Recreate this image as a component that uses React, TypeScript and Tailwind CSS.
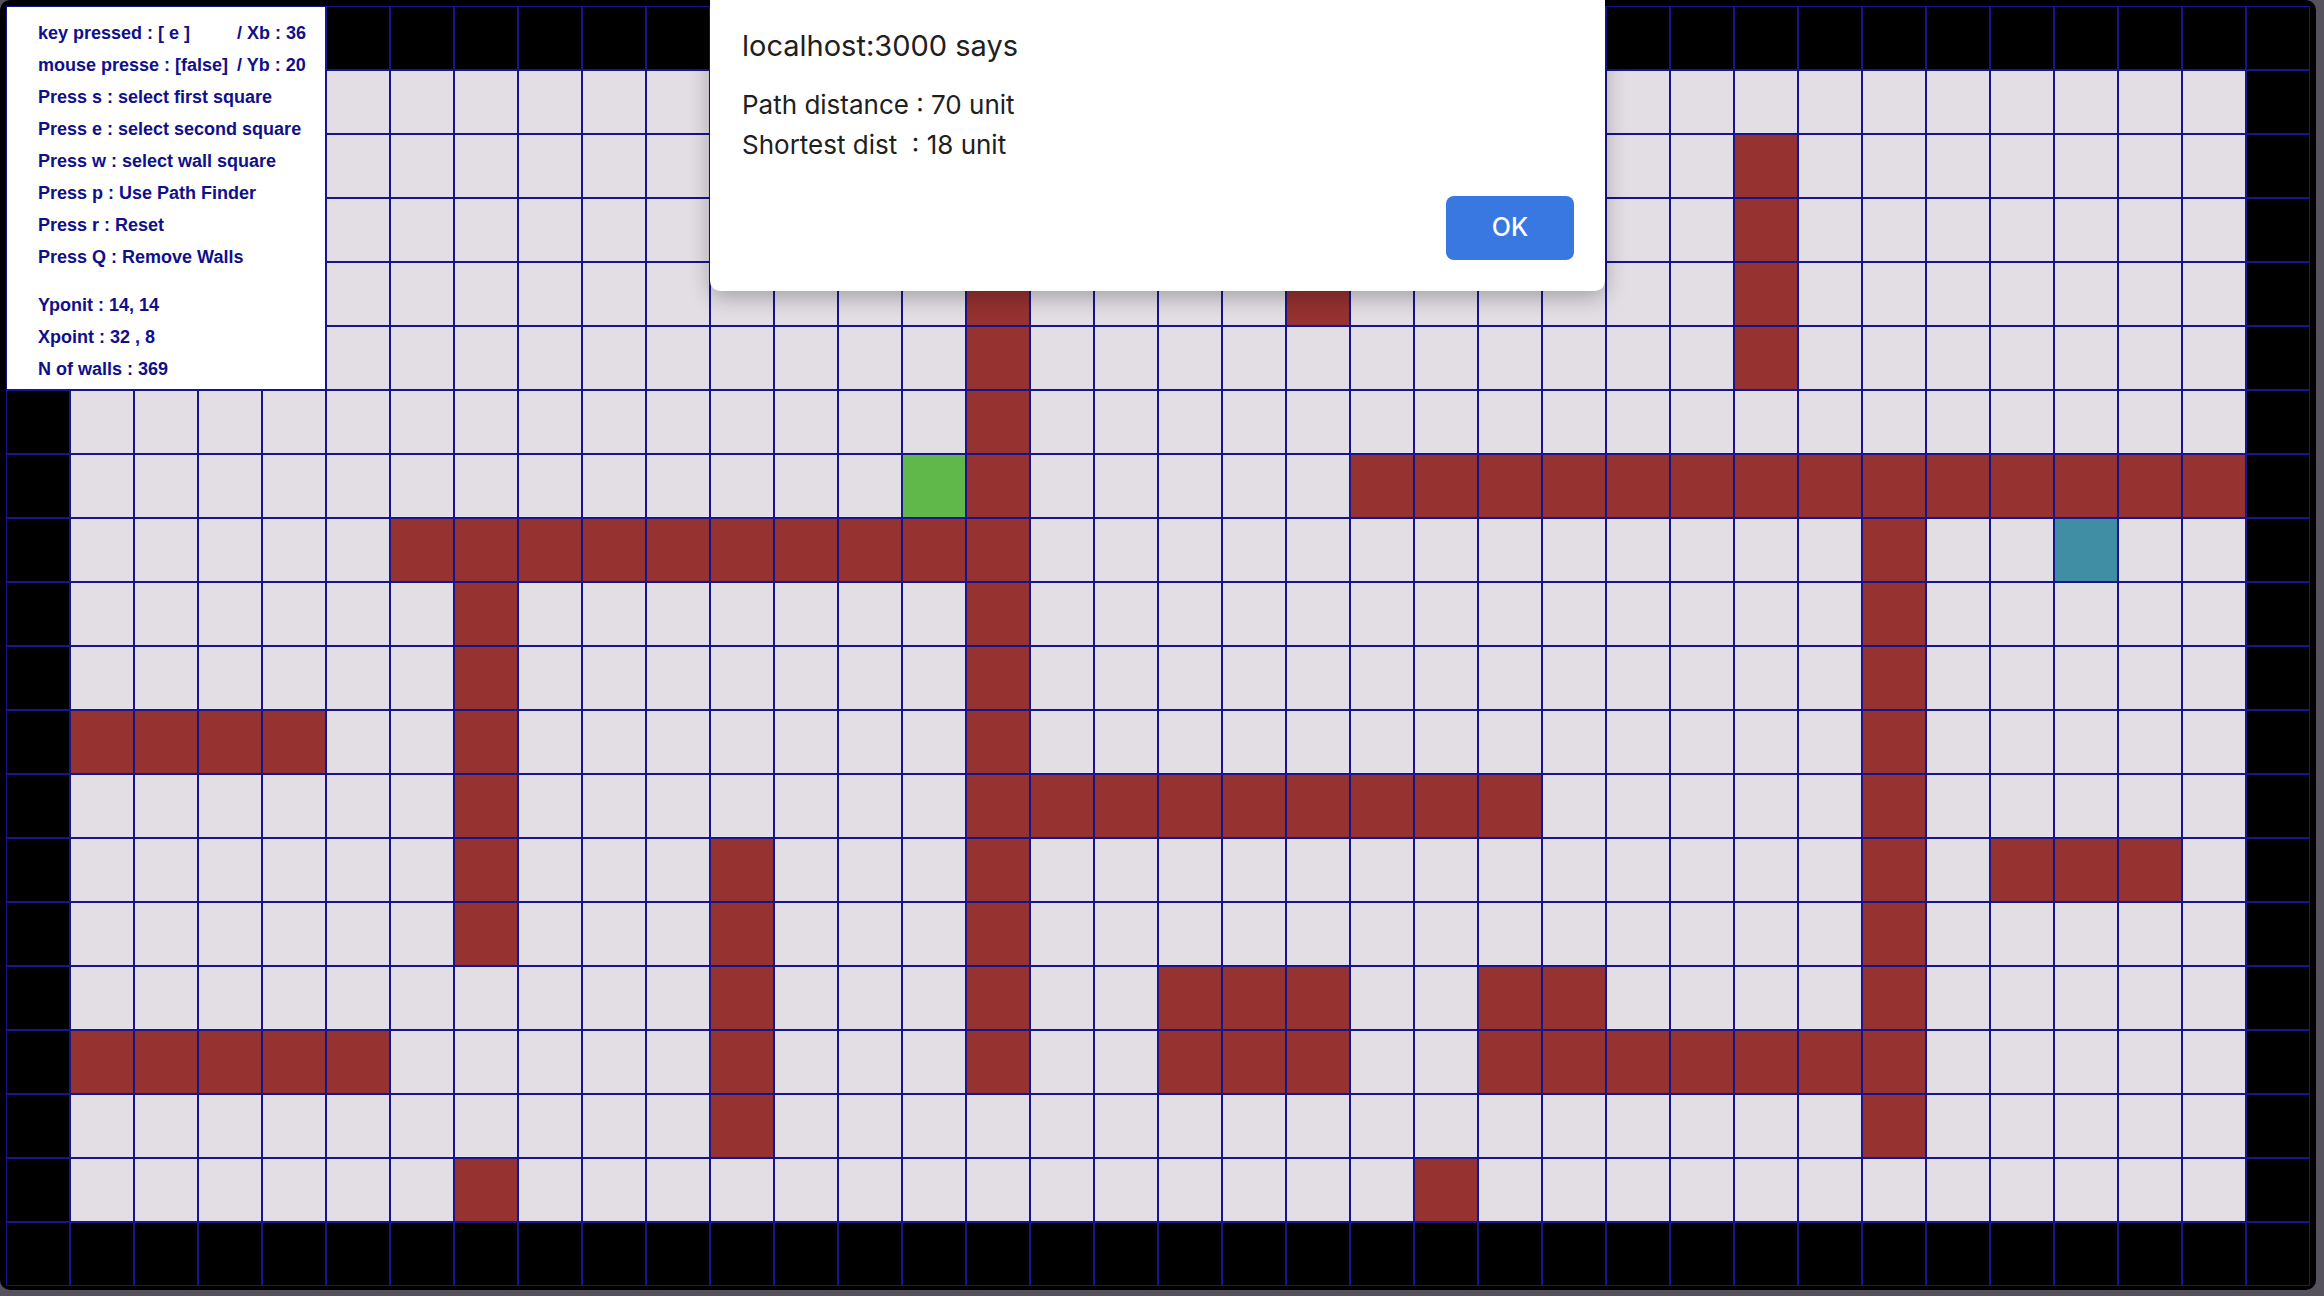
import React from "react";

const ROWS = 20;
const COLS = 36;

const wallSet = new Set<string>();
const addWall = (r: number, c: number) => wallSet.add(`${r}-${c}`);
const hRun = (r: number, c1: number, c2: number) => {
  for (let c = c1; c <= c2; c++) addWall(r, c);
};
const vRun = (c: number, r1: number, r2: number) => {
  for (let r = r1; r <= r2; r++) addWall(r, c);
};

vRun(27, 2, 5);
vRun(15, 1, 16);
addWall(4, 20);
hRun(7, 21, 34);
hRun(8, 6, 14);
vRun(29, 8, 17);
vRun(7, 9, 14);
hRun(11, 1, 4);
vRun(11, 13, 17);
hRun(12, 16, 23);
hRun(13, 31, 33);
hRun(15, 18, 20);
hRun(15, 23, 24);
hRun(16, 1, 5);
hRun(16, 18, 20);
hRun(16, 23, 28);
addWall(18, 7);
addWall(18, 22);

function cellClass(r: number, c: number): string {
  if (r === 0 || c === 0 || r === ROWS - 1 || c === COLS - 1) return "bg-black";
  if (r === 7 && c === 14) return "bg-[#60b84a]";
  if (r === 8 && c === 32) return "bg-[#3f8ea4]";
  if (wallSet.has(`${r}-${c}`)) return "bg-[#963230]";
  return "bg-[#e2dee4]";
}

const cells: { key: string; cls: string }[] = [];
for (let r = 0; r < ROWS; r++) {
  for (let c = 0; c < COLS; c++) {
    cells.push({ key: `${r}-${c}`, cls: cellClass(r, c) });
  }
}

const infoLines = [
  "Press s : select first square",
  "Press e : select second square",
  "Press w : select wall square",
  "Press p : Use Path Finder",
  "Press r : Reset",
  "Press Q : Remove Walls",
];

export default function App() {
  return (
    <div className="w-[2324px] h-[1296px] bg-[#55525e] overflow-hidden relative">
      <div className="w-[2316px] h-[1290px] bg-black rounded-[10px] pt-[6px] pl-[6px] relative">
        <div className="grid grid-cols-[repeat(36,64px)] grid-rows-[repeat(20,64px)] w-[2304px]">
          {cells.map((cell) => (
            <div
              key={cell.key}
              className={`box-border border border-[#15158e] ${cell.cls}`}
            />
          ))}
        </div>

        {/* Info panel */}
        <div
          className="absolute left-[6px] top-[6px] w-[320px] h-[384px] bg-white border border-[#15158e] pt-[10px] pl-[31px] text-[#10108a] font-bold text-[18px] leading-[32px]"
          style={{ fontFamily: '"Liberation Sans", Arial, sans-serif' }}
        >
          <div className="flex">
            <span className="w-[199px]">key pressed : [ e ]</span>
            <span>/ Xb : 36</span>
          </div>
          <div className="flex">
            <span className="w-[199px]">mouse presse : [false]</span>
            <span>/ Yb : 20</span>
          </div>
          {infoLines.map((l) => (
            <div key={l}>{l}</div>
          ))}
          <div className="mt-[16px]">Yponit : 14, 14</div>
          <div>Xpoint : 32 , 8</div>
          <div>N of walls : 369</div>
        </div>

        {/* Alert dialog */}
        <div
          className="absolute left-[710px] top-0 w-[895px] h-[291px] bg-white rounded-b-[10px] shadow-[0_6px_22px_rgba(0,0,0,0.28)] pt-[28px] pl-[32px] pr-[31px] flex flex-col text-[#202020]"
          style={{ fontFamily: 'Inter, "Liberation Sans", sans-serif' }}
        >
          <div className="text-[29px] leading-[36px]">localhost:3000 says</div>
          <div className="mt-[21px] text-[26px] leading-[40px]">
            <div>Path distance : 70 unit</div>
            <div className="whitespace-pre">Shortest dist  : 18 unit</div>
          </div>
          <div className="flex justify-end mt-[31px]">
            <button className="w-[128px] h-[64px] rounded-[8px] bg-[#3878e0] text-white text-[25px] font-medium">
              OK
            </button>
          </div>
        </div>
      </div>
    </div>
  );
}
